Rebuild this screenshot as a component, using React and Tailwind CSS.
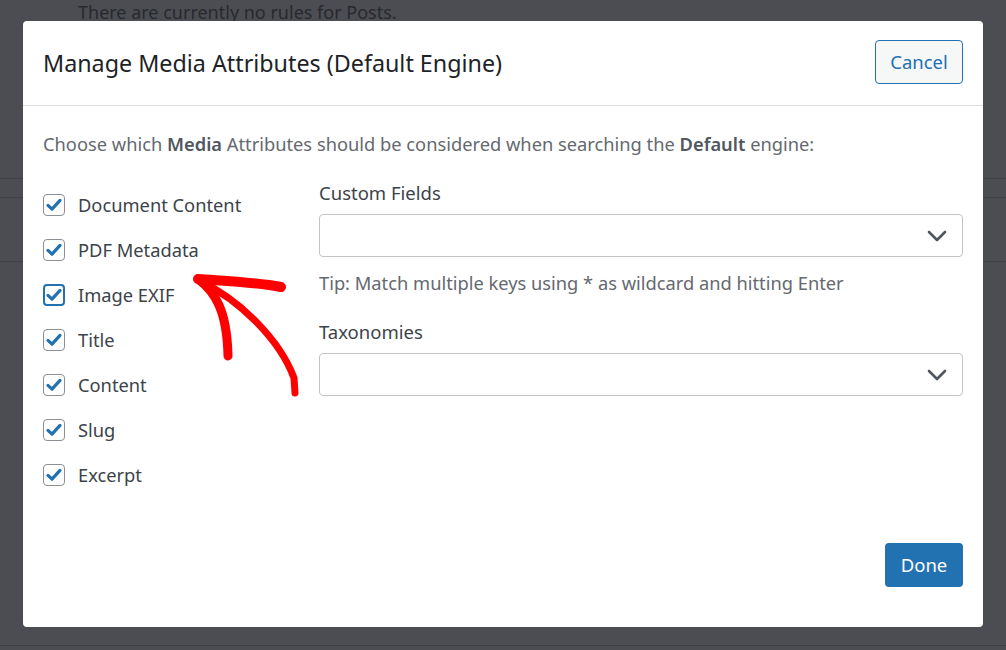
import React from "react";

const font = { fontFamily: '"Noto Sans", "Open Sans", Arial, sans-serif' };

function Check({ focused }) {
  return (
    <div
      className={
        "w-[22px] h-[22px] rounded-[4px] bg-white flex items-center justify-center shrink-0 " +
        (focused ? "border-2 border-[#2271b1]" : "border border-[#8c8f94]")
      }
    >
      <svg width="18" height="18" viewBox="0 0 18 18">
        <path d="M3 9.4 L7 13.2 L15 4.4" fill="none" stroke="#2271b1" strokeWidth="3.2" strokeLinecap="round" strokeLinejoin="round" />
      </svg>
    </div>
  );
}

function Chevron() {
  return (
    <svg width="20" height="12" viewBox="0 0 20 12">
      <path d="M2 2 L10 10 L18 2" fill="none" stroke="#50575e" strokeWidth="2.6" strokeLinecap="round" strokeLinejoin="round" />
    </svg>
  );
}

function SelectBox() {
  return (
    <div className="h-[43px] border border-[#c3c4c7] rounded-[4px] bg-white flex items-center justify-end pr-[15px]">
      <Chevron />
    </div>
  );
}

const items = ["Document Content", "PDF Metadata", "Image EXIF", "Title", "Content", "Slug", "Excerpt"];

export default function App() {
  return (
    <div className="relative w-[1006px] h-[650px] overflow-hidden bg-[#4c4d52]" style={font}>
      {/* background page under overlay */}
      <div className="flex flex-col h-full">
        <div className="pl-[78px] pt-0 text-[18px] leading-[24px] text-[#28292d]">There are currently no rules for Posts.</div>
        <div className="h-[155px] border-b border-[#404146]"></div>
        <div className="h-[19px] border-b border-[#404146]"></div>
        <div className="h-[64px] border-b border-[#404146]"></div>
        <div className="flex-1 border-b border-[#3f4045]"></div>
        <div className="h-[4px]"></div>
      </div>

      {/* modal */}
      <div className="absolute left-[23px] top-[21px] w-[960px] h-[606px] bg-white rounded-[4px] flex flex-col">
        <div className="h-[85px] shrink-0 flex items-center justify-between pl-[20px] pr-[20px] border-b border-[#dcdcde]">
          <div className="text-[23.3px] text-[#1d2327] mt-[1px]">Manage Media Attributes (Default Engine)</div>
          <button className="w-[88px] h-[44px] rounded-[4px] border border-[#2271b1] bg-[#f6f7f7] text-[#2271b1] text-[18.5px] flex items-center justify-center mt-[-2px]">
            Cancel
          </button>
        </div>
        <div className="flex-1 flex flex-col px-[20px]">
          <p className="mt-[25px] text-[18.3px] leading-[26px] text-[#646970]">
            Choose which <b className="font-semibold text-[#50575e]">Media</b> Attributes should be considered when searching the{" "}
            <b className="font-semibold text-[#50575e]">Default</b> engine:
          </p>
          <div className="mt-[23px] flex">
            <div className="w-[276px] shrink-0 flex flex-col pt-[2px]">
              {items.map((it, i) => (
                <div key={it} className="h-[45px] flex items-center gap-[13px]">
                  <Check focused={i === 2} />
                  <span className="text-[18.3px] text-[#3c434a] mt-[1px]">{it}</span>
                </div>
              ))}
            </div>
            <div className="flex-1 flex flex-col">
              <div className="text-[18.5px] leading-[26px] text-[#3c434a]">Custom Fields</div>
              <div className="mt-[8px]"><SelectBox /></div>
              <div className="mt-[13px] text-[18.3px] leading-[26px] text-[#646970]">Tip: Match multiple keys using * as wildcard and hitting Enter</div>
              <div className="mt-[23px] text-[18.5px] leading-[26px] text-[#3c434a]">Taxonomies</div>
              <div className="mt-[8px]"><SelectBox /></div>
            </div>
          </div>
          <div className="flex-1"></div>
          <div className="flex justify-end pb-[40px]">
            <button className="w-[78px] h-[44px] rounded-[4px] bg-[#2271b1] text-white text-[18.5px] flex items-center justify-center">
              Done
            </button>
          </div>
        </div>
      </div>

      {/* red annotation arrow */}
      <svg className="absolute left-0 top-0 pointer-events-none" width="1006" height="650" viewBox="0 0 1006 650">
        <g fill="none" stroke="#ff0000" strokeLinecap="round" strokeLinejoin="round">
          <path d="M198 279 C 225 281, 255 282, 281 287" strokeWidth="10" />
          <path d="M198 279 C 215 292, 227 310, 228 356" strokeWidth="9" />
          <path d="M200 281 C 240 300, 280 340, 294 378 L 295 393" strokeWidth="7" />
        </g>
      </svg>
    </div>
  );
}
